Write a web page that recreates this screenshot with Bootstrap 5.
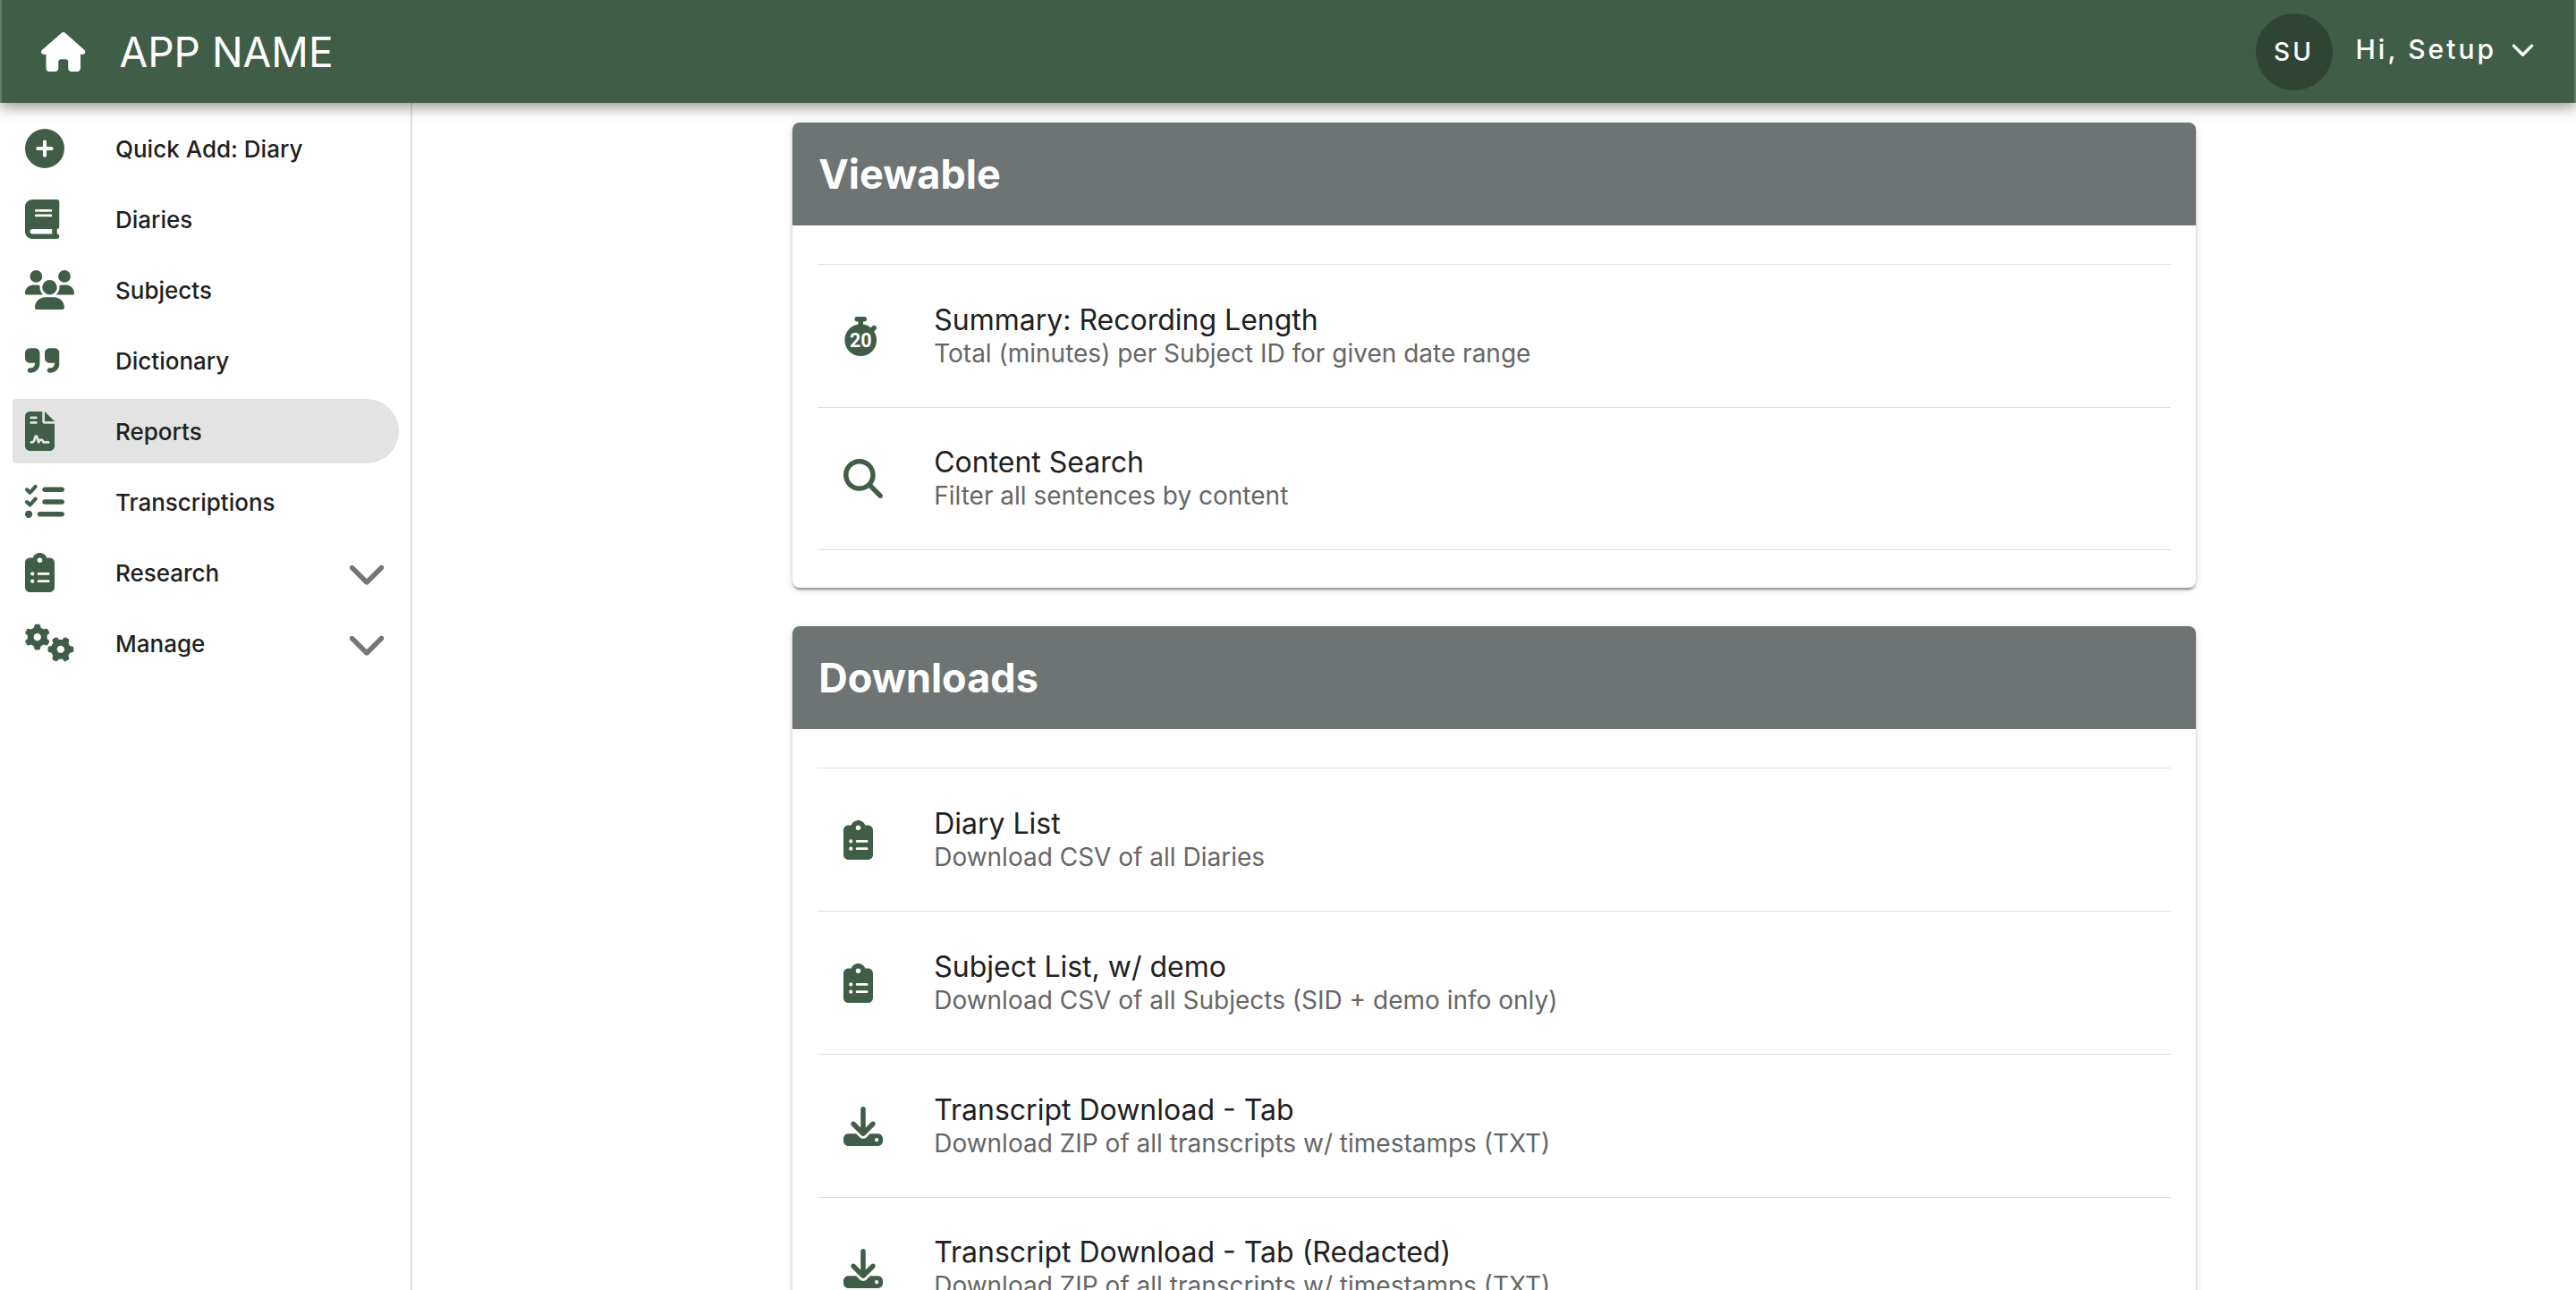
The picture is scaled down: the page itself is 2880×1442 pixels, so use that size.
<!DOCTYPE html>
<html lang="en">
<head>
<meta charset="utf-8">
<meta name="viewport" content="width=device-width, initial-scale=1">
<title>App Name - Reports</title>
<link href="https://cdn.jsdelivr.net/npm/bootstrap@5.3.0/dist/css/bootstrap.min.css" rel="stylesheet">
<style>
:root { --brand: #405e47; --brand-dark: #2e4535; --slate: #6e7473; }
body { font-family: Inter, "Liberation Sans", sans-serif; color: #212121; background: #fff; }
.ico { height: 44px; width: auto; fill: var(--brand); display: block; flex: none; }
.topbar { background: var(--brand); height: 115px; padding: 0 44px; z-index: 2; border: solid rgba(255,255,255,.2); border-width: 0 2px; box-shadow: 0 4px 16px rgba(0,0,0,.45); }
.topbar .ico { fill: #fff; }
.app-title { font-size: 46px; line-height: 52px; margin-left: 38px; color: #fff; }
.avatar { width: 86px; height: 86px; background: var(--brand-dark); color: #fff; font-size: 28px; font-weight: 500; letter-spacing: 3px; }
.user-menu { font-size: 30px; line-height: 36px; font-weight: 500; letter-spacing: 3px; color: #fff; padding: 0 0 6px; margin-left: 26px; gap: 16px; }
.user-menu .ico { height: 27px; }
.sidebar { width: 461px; flex: none; border-right: 2px solid #e0e0e0; padding: 15px 13px 0 14px; gap: 7px; }
.side-item { height: 72px; padding: 0 14px; font-size: 26px; font-weight: 500; color: #212121; border: 0; background: none; border-radius: 4px 36px 36px 4px; text-align: left; text-decoration: none; }
.side-item.active { background: #e3e3e3; }
.side-icon { width: 101px; flex: none; }
.side-item .chev { fill: #757575; }
.report-col { padding: 22px 22px 0; gap: 43px; }
.report-card { border: 0; border-radius: 8px; box-shadow: 0 4px 3px -2px rgba(0,0,0,.3), 0 2px 3px rgba(0,0,0,.18), 0 2px 10px rgba(0,0,0,.12); }
.report-card .card-header { background: var(--slate); color: #fff; border: 0; height: 115px; padding: 0 29px; border-radius: 8px 8px 0 0; }
.report-card h2 { font-size: 45px; font-weight: 700; }
.report-card .card-body { padding: 43px 28px 42px; }
.report-row { height: 160px; border: solid #e0e0e0; border-width: 1px 0 0; padding: 0 29px; color: #212121; text-decoration: none; }
.report-row:last-child { border-bottom-width: 1px; }
.report-icon { width: 101px; flex: none; }
.row-title { font-size: 32px; line-height: 38px; }
.row-sub { font-size: 28px; line-height: 36px; color: #666; }
.watch-num { font: 700 250px Roboto, sans-serif; fill: #fff; }
</style>
</head>
<body class="vh-100 overflow-hidden d-flex flex-column">
<svg width="0" height="0" class="position-absolute" aria-hidden="true">
<symbol id="house" viewBox="0 0 576 512"><path d="M575.8 255.5c0 18-15 32.1-32 32.1h-32l.7 160.2c0 2.7-.2 5.4-.5 8.1V472c0 22.1-17.9 40-40 40H456c-1.1 0-2.2 0-3.3-.1c-1.4 .1-2.8 .1-4.2 .1H416 392c-22.1 0-40-17.9-40-40V448 384c0-17.7-14.3-32-32-32H256c-17.7 0-32 14.3-32 32v64 24c0 22.1-17.9 40-40 40H160 128.1c-1.5 0-3-.1-4.5-.2c-1.2 .1-2.4 .2-3.6 .2H104c-22.1 0-40-17.9-40-40V360c0-.9 0-1.9 .1-2.8V287.6H32c-18 0-32-14-32-32.1c0-9 3-17 10-24L266.4 8c7-7 15-8 22-8s15 2 21 7L564.8 231.5c8 7 12 15 11 24z"/></symbol>
<symbol id="plus" viewBox="0 0 512 512"><path d="M256 512A256 256 0 1 0 256 0a256 256 0 1 0 0 512zM232 344V280H168c-13.3 0-24-10.7-24-24s10.7-24 24-24h64V168c0-13.3 10.7-24 24-24s24 10.7 24 24v64h64c13.3 0 24 10.7 24 24s-10.7 24-24 24H280v64c0 13.3-10.7 24-24 24s-24-10.7-24-24z"/></symbol>
<symbol id="book" viewBox="0 0 448 512"><path d="M96 0C43 0 0 43 0 96V416c0 53 43 96 96 96H384h32c17.7 0 32-14.3 32-32s-14.3-32-32-32V384c17.7 0 32-14.3 32-32V32c0-17.7-14.3-32-32-32H384 96zm0 384H352v64H96c-17.7 0-32-14.3-32-32s14.3-32 32-32zm32-240c0-8.8 7.2-16 16-16H336c8.8 0 16 7.2 16 16s-7.2 16-16 16H144c-8.8 0-16-7.2-16-16zm16 48H336c8.8 0 16 7.2 16 16s-7.2 16-16 16H144c-8.8 0-16-7.2-16-16s7.2-16 16-16z"/></symbol>
<symbol id="users" viewBox="0 0 640 512"><path d="M144 0a80 80 0 1 1 0 160A80 80 0 1 1 144 0zM512 0a80 80 0 1 1 0 160A80 80 0 1 1 512 0zM0 298.7C0 239.8 47.8 192 106.7 192h42.7c15.9 0 31 3.5 44.6 9.7c-1.3 7.2-1.9 14.7-1.9 22.3c0 38.2 16.8 72.5 43.3 96c-.2 0-.4 0-.7 0H21.3C9.6 320 0 310.4 0 298.7zM405.3 320c-.2 0-.4 0-.7 0c26.6-23.5 43.3-57.8 43.3-96c0-7.6-.7-15-1.9-22.3c13.6-6.3 28.7-9.7 44.6-9.7h42.7C592.2 192 640 239.8 640 298.7c0 11.8-9.6 21.3-21.3 21.3H405.3zM224 224a96 96 0 1 1 192 0 96 96 0 1 1 -192 0zM128 485.3C128 411.7 187.7 352 261.3 352H378.7C452.3 352 512 411.7 512 485.3c0 14.7-11.9 26.7-26.7 26.7H154.7c-14.7 0-26.7-11.9-26.7-26.7z"/></symbol>
<symbol id="quote" viewBox="0 0 448 512"><path d="M448 296c0 66.3-53.7 120-120 120h-8c-17.7 0-32-14.3-32-32s14.3-32 32-32h8c30.9 0 56-25.1 56-56v-8H320c-35.3 0-64-28.7-64-64V160c0-35.3 28.7-64 64-64h64c35.3 0 64 28.7 64 64v32 32 72zm-256 0c0 66.3-53.7 120-120 120H64c-17.7 0-32-14.3-32-32s14.3-32 32-32h8c30.9 0 56-25.1 56-56v-8H64c-35.3 0-64-28.7-64-64V160c0-35.3 28.7-64 64-64h64c35.3 0 64 28.7 64 64v32 32 72z"/></symbol>
<symbol id="contract" viewBox="0 0 384 512"><path d="M64 0C28.7 0 0 28.7 0 64V448c0 35.3 28.7 64 64 64H320c35.3 0 64-28.7 64-64V160H256c-17.7 0-32-14.3-32-32V0H64zM256 0V128H384L256 0zM80 64h64c8.8 0 16 7.2 16 16s-7.2 16-16 16H80c-8.8 0-16-7.2-16-16s7.2-16 16-16zm0 64h64c8.8 0 16 7.2 16 16s-7.2 16-16 16H80c-8.8 0-16-7.2-16-16s7.2-16 16-16zm54.2 253.8c-6.1 20.3-24.8 34.2-46 34.2H80c-8.8 0-16-7.2-16-16s7.2-16 16-16h8.2c7.1 0 13.3-4.6 15.3-11.4l14.9-49.5c3.4-11.3 13.8-19.1 25.6-19.1s22.2 7.7 25.6 19.1l11.6 38.6c7.4-6.2 16.8-9.7 26.8-9.7c15.9 0 30.4 9 37.5 23.2l4.4 8.8H304c8.8 0 16 7.2 16 16s-7.2 16-16 16H240c-6.1 0-11.6-3.4-14.3-8.8l-8.8-17.7c-1.7-3.4-5.1-5.5-8.8-5.5s-7.2 2.1-8.8 5.5l-8.8 17.7c-2.9 5.9-9.2 9.4-15.7 8.8s-12.1-5.1-13.9-11.3L144 349l-9.8 32.8z"/></symbol>
<symbol id="checks" viewBox="0 0 512 512"><path d="M152.1 38.2c9.9 8.9 10.7 24 1.8 33.9l-72 80c-4.4 4.9-10.6 7.8-17.2 7.9s-12.9-2.4-17.6-7L7 113C-2.3 103.6-2.3 88.4 7 79s24.6-9.4 33.9 0l22.1 22.1 55.1-61.2c8.9-9.9 24-10.7 33.9-1.8zm0 160c9.9 8.9 10.7 24 1.8 33.9l-72 80c-4.4 4.9-10.6 7.8-17.2 7.9s-12.9-2.4-17.6-7L7 273c-9.4-9.4-9.4-24.6 0-33.9s24.6-9.4 33.9 0l22.1 22.1 55.1-61.2c8.9-9.9 24-10.7 33.9-1.8zM224 96c0-17.7 14.3-32 32-32H480c17.7 0 32 14.3 32 32s-14.3 32-32 32H256c-17.7 0-32-14.3-32-32zm0 160c0-17.7 14.3-32 32-32H480c17.7 0 32 14.3 32 32s-14.3 32-32 32H256c-17.7 0-32-14.3-32-32zM160 416c0-17.7 14.3-32 32-32H480c17.7 0 32 14.3 32 32s-14.3 32-32 32H192c-17.7 0-32-14.3-32-32zM48 368a48 48 0 1 1 0 96 48 48 0 1 1 0-96z"/></symbol>
<symbol id="clipboard" viewBox="0 0 384 512"><path d="M192 0c-41.8 0-77.4 26.7-90.5 64H64C28.7 64 0 92.7 0 128V448c0 35.3 28.7 64 64 64H320c35.3 0 64-28.7 64-64V128c0-35.3-28.7-64-64-64H282.5C269.4 26.7 233.8 0 192 0zm0 64a32 32 0 1 1 0 64 32 32 0 1 1 0-64zM72 272a24 24 0 1 1 48 0 24 24 0 1 1 -48 0zm104-16H304c8.8 0 16 7.2 16 16s-7.2 16-16 16H176c-8.8 0-16-7.2-16-16s7.2-16 16-16zM72 368a24 24 0 1 1 48 0 24 24 0 1 1 -48 0zm88 0c0-8.8 7.2-16 16-16H304c8.8 0 16 7.2 16 16s-7.2 16-16 16H176c-8.8 0-16-7.2-16-16z"/></symbol>
<symbol id="gears" viewBox="0 0 640 512"><path id="gear" d="M308.5 135.3c7.1-6.3 9.9-16.2 6.2-25c-2.3-5.3-4.8-10.5-7.6-15.5L304 89.4c-3-5-6.3-9.9-9.8-14.6c-5.7-7.6-15.7-10.1-24.7-7.1l-28.2 9.3c-10.7-8.8-23-16-36.2-20.9L199 27.1c-1.9-9.3-9.1-16.7-18.5-17.8C173.9 8.4 167.2 8 160.4 8h-.7c-6.8 0-13.5 .4-20.1 1.2c-9.4 1.1-16.6 8.6-18.5 17.8L115 56.1c-13.3 5-25.5 12.1-36.2 20.9L50.5 67.8c-9-3-19-.5-24.7 7.1c-3.5 4.7-6.8 9.6-9.9 14.6l-3 5.3c-2.8 5-5.3 10.2-7.6 15.6c-3.7 8.7-.9 18.6 6.2 25l22.2 19.8C32.6 161.9 32 168.9 32 176s.6 14.1 1.7 20.9L11.5 216.7c-7.1 6.3-9.9 16.2-6.2 25c2.3 5.3 4.8 10.5 7.6 15.6l3 5.2c3 5.1 6.3 9.9 9.9 14.6c5.7 7.6 15.7 10.1 24.7 7.1l28.2-9.3c10.7 8.8 23 16 36.2 20.9l6.1 29.1c1.9 9.3 9.1 16.7 18.5 17.8c6.7 .8 13.5 1.2 20.4 1.2s13.7-.4 20.4-1.2c9.4-1.1 16.6-8.6 18.5-17.8l6.1-29.1c13.3-5 25.5-12.1 36.2-20.9l28.2 9.3c9 3 19 .5 24.7-7.1c3.5-4.7 6.8-9.5 9.8-14.6l3.1-5.4c2.8-5 5.3-10.2 7.6-15.5c3.7-8.7 .9-18.6-6.2-25l-22.2-19.8c1.1-6.8 1.7-13.8 1.7-20.9s-.6-14.1-1.7-20.9l22.2-19.8zM112 176a48 48 0 1 1 96 0 48 48 0 1 1 -96 0z"/><use href="#gear" transform="translate(464 336) rotate(90) translate(-160 -176)"/></symbol>
<symbol id="search" viewBox="0 0 512 512"><path d="M416 208c0 45.9-14.9 88.3-40 122.7L502.6 457.4c12.5 12.5 12.5 32.8 0 45.3s-32.8 12.5-45.3 0L330.7 376c-34.4 25.2-76.8 40-122.7 40C93.1 416 0 322.9 0 208S93.1 0 208 0S416 93.1 416 208zM208 352a144 144 0 1 0 0-288 144 144 0 1 0 0 288z"/></symbol>
<symbol id="download" viewBox="0 0 512 512"><path d="M288 32c0-17.7-14.3-32-32-32s-32 14.3-32 32V274.7l-73.4-73.4c-12.5-12.5-32.8-12.5-45.3 0s-12.5 32.8 0 45.3l128 128c12.5 12.5 32.8 12.5 45.3 0l128-128c12.5-12.5 12.5-32.8 0-45.3s-32.8-12.5-45.3 0L288 274.7V32zM64 352c-35.3 0-64 28.7-64 64v32c0 35.3 28.7 64 64 64H448c35.3 0 64-28.7 64-64V416c0-35.3-28.7-64-64-64H346.5l-45.3 45.3c-25 25-65.5 25-90.5 0L165.5 352H64zm368 56a24 24 0 1 1 0 48 24 24 0 1 1 0-48z"/></symbol>
<symbol id="chevron" viewBox="0 0 512 512"><path d="M233.4 406.6c12.5 12.5 32.8 12.5 45.3 0l192-192c12.5-12.5 12.5-32.8 0-45.3s-32.8-12.5-45.3 0L256 338.7 86.6 169.4c-12.5-12.5-32.8-12.5-45.3 0s-12.5 32.8 0 45.3l192 192z"/></symbol>
</svg>

<header class="topbar d-flex align-items-center flex-shrink-0 position-relative">
  <a href="#" aria-label="Home"><svg class="ico" viewBox="0 0 576 512"><use href="#house"/></svg></a>
  <span class="app-title">APP NAME</span>
  <span class="avatar rounded-circle d-flex align-items-center justify-content-center ms-auto">SU</span>
  <button type="button" class="user-menu btn border-0 d-flex align-items-center">Hi, Setup<svg class="ico" viewBox="0 0 512 512"><use href="#chevron"/></svg></button>
</header>

<div class="d-flex flex-grow-1 overflow-hidden">
  <nav class="sidebar d-flex flex-column" aria-label="Main">
    <a href="#" class="side-item d-flex align-items-center"><span class="side-icon"><svg class="ico" viewBox="0 0 512 512"><use href="#plus"/></svg></span>Quick Add: Diary</a>
    <a href="#" class="side-item d-flex align-items-center"><span class="side-icon"><svg class="ico" viewBox="0 0 448 512"><use href="#book"/></svg></span>Diaries</a>
    <a href="#" class="side-item d-flex align-items-center"><span class="side-icon"><svg class="ico" viewBox="0 0 640 512"><use href="#users"/></svg></span>Subjects</a>
    <a href="#" class="side-item d-flex align-items-center"><span class="side-icon"><svg class="ico" viewBox="0 0 448 512"><use href="#quote"/></svg></span>Dictionary</a>
    <a href="#" class="side-item active d-flex align-items-center" aria-current="page"><span class="side-icon"><svg class="ico" viewBox="0 0 384 512"><use href="#contract"/></svg></span>Reports</a>
    <a href="#" class="side-item d-flex align-items-center"><span class="side-icon"><svg class="ico" viewBox="0 0 512 512"><use href="#checks"/></svg></span>Transcriptions</a>
    <button type="button" class="side-item d-flex align-items-center"><span class="side-icon"><svg class="ico" viewBox="0 0 384 512"><use href="#clipboard"/></svg></span>Research<svg class="ico chev ms-auto" viewBox="0 0 512 512"><use href="#chevron"/></svg></button>
    <button type="button" class="side-item d-flex align-items-center"><span class="side-icon"><svg class="ico" viewBox="0 0 640 512"><use href="#gears"/></svg></span>Manage<svg class="ico chev ms-auto" viewBox="0 0 512 512"><use href="#chevron"/></svg></button>
  </nav>

  <main class="flex-grow-1 overflow-hidden">
    <div class="row mx-0 justify-content-center">
      <div class="report-col col-8 d-flex flex-column">
        <section class="report-card card">
          <div class="card-header d-flex align-items-center"><h2 class="mb-0">Viewable</h2></div>
          <div class="card-body">
            <div class="list-group list-group-flush">
              <a href="#" class="report-row d-flex align-items-center"><span class="report-icon"><svg class="ico" viewBox="0 0 448 512"><path d="M176 0c-17.7 0-32 14.3-32 32s14.3 32 32 32h16V98.4C92.3 113.8 16 200 16 304c0 114.9 93.1 208 208 208s208-93.1 208-208c0-41.8-12.3-80.7-33.5-113.2l24.1-24.1c12.5-12.5 12.5-32.8 0-45.3s-32.8-12.5-45.3 0L355.7 143c-28.1-23-62.2-38.8-99.7-44.6V64h16c17.7 0 32-14.3 32-32s-14.3-32-32-32H224 176z"/><text class="watch-num" x="224" y="392" text-anchor="middle">20</text></svg></span><span><span class="row-title d-block">Summary: Recording Length</span><span class="row-sub d-block">Total (minutes) per Subject ID for given date range</span></span></a>
              <a href="#" class="report-row d-flex align-items-center"><span class="report-icon"><svg class="ico" viewBox="0 0 512 512"><use href="#search"/></svg></span><span><span class="row-title d-block">Content Search</span><span class="row-sub d-block">Filter all sentences by content</span></span></a>
            </div>
          </div>
        </section>
        <section class="report-card card">
          <div class="card-header d-flex align-items-center"><h2 class="mb-0">Downloads</h2></div>
          <div class="card-body">
            <div class="list-group list-group-flush">
              <a href="#" class="report-row d-flex align-items-center"><span class="report-icon"><svg class="ico" viewBox="0 0 384 512"><use href="#clipboard"/></svg></span><span><span class="row-title d-block">Diary List</span><span class="row-sub d-block">Download CSV of all Diaries</span></span></a>
              <a href="#" class="report-row d-flex align-items-center"><span class="report-icon"><svg class="ico" viewBox="0 0 384 512"><use href="#clipboard"/></svg></span><span><span class="row-title d-block">Subject List, w/ demo</span><span class="row-sub d-block">Download CSV of all Subjects (SID + demo info only)</span></span></a>
              <a href="#" class="report-row d-flex align-items-center"><span class="report-icon"><svg class="ico" viewBox="0 0 512 512"><use href="#download"/></svg></span><span><span class="row-title d-block">Transcript Download - Tab</span><span class="row-sub d-block">Download ZIP of all transcripts w/ timestamps (TXT)</span></span></a>
              <a href="#" class="report-row d-flex align-items-center"><span class="report-icon"><svg class="ico" viewBox="0 0 512 512"><use href="#download"/></svg></span><span><span class="row-title d-block">Transcript Download - Tab (Redacted)</span><span class="row-sub d-block">Download ZIP of all transcripts w/ timestamps (TXT)</span></span></a>
            </div>
          </div>
        </section>
      </div>
    </div>
  </main>
</div>
<script src="https://cdn.jsdelivr.net/npm/bootstrap@5.3.0/dist/js/bootstrap.bundle.min.js"></script>
</body>
</html>
